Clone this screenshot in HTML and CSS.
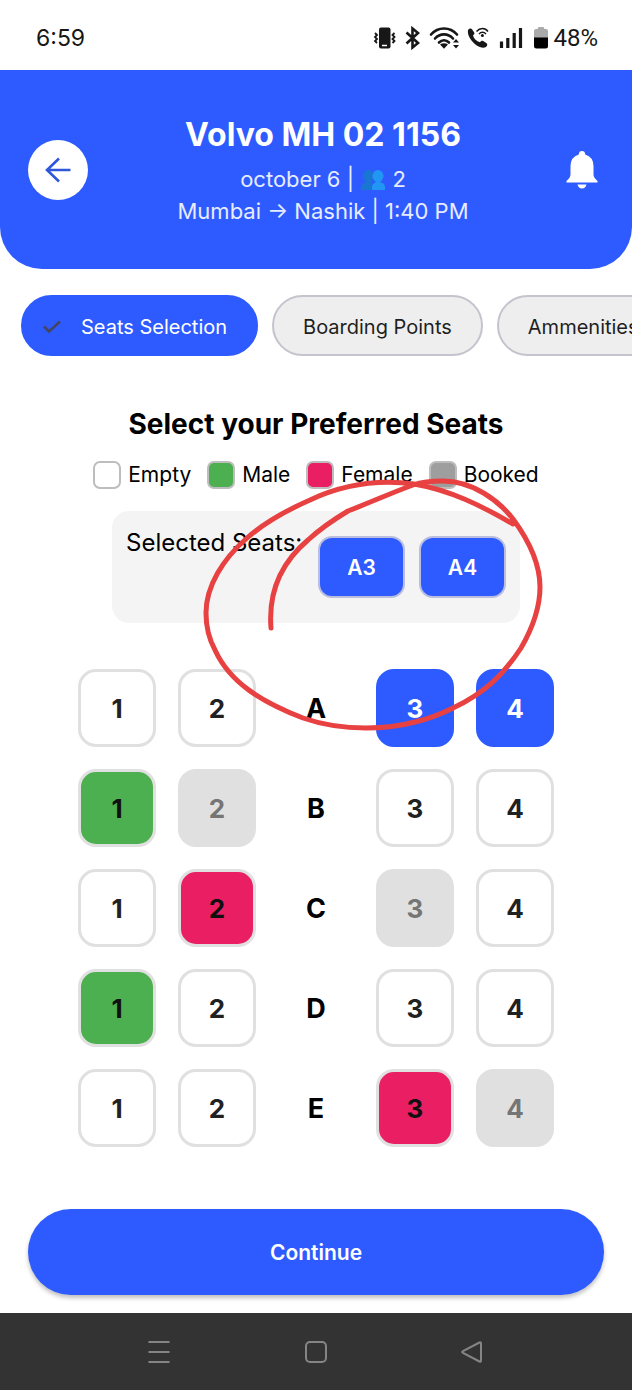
FILE: index.html
```html
<!DOCTYPE html>
<html lang="en">
<head>
<meta charset="utf-8">
<meta name="viewport" content="width=device-width, initial-scale=1">
<title>Seat selection</title>
<link rel="stylesheet" href="styles.css">
</head>
<body>
<div class="screen">
  <div class="status">
    <span class="clock">6:59</span>
    <div class="indicators">
      <svg width="24" height="24" viewBox="0 0 24 24" aria-hidden="true"><rect x="6" y="1.500" width="11.500" height="21" rx="2" fill="#171717"/><path d="M9 19.500h5" stroke="#fff" stroke-width="1.500"/><path d="M2 7l2 2-2 2 2 2-2 2 2 2M21.500 7l-2 2 2 2-2 2 2 2-2 2" fill="none" stroke="#171717" stroke-width="1.800"/></svg>
      <svg class="bluetooth" width="16" height="24" viewBox="0 0 16 24" aria-hidden="true"><path d="M1.500 6.500l11.500 10.500L7.500 21.500V2.500L13 7 1.500 17.500" fill="none" stroke="#171717" stroke-width="2.600"/></svg>
      <svg class="wifi" width="32" height="24" viewBox="0 0 32 24" aria-hidden="true"><g fill="none" stroke="#171717" stroke-width="2.600" stroke-linecap="round"><path d="M2 8.500C9 .5 21 .5 28 8.500"/><path d="M6 12.500c5-5.500 13-5.500 18 0"/><path d="M10 16.500c3-3 7-3 10 0"/></g><path d="M11 18.500q4-2.500 8 0L15 22.800zM24 16.500l3-3.500 3 3.500zM24 19l3 3.500 3-3.500z" fill="#171717"/></svg>
      <svg class="call" width="24" height="24" viewBox="0 0 24 24" aria-hidden="true"><path d="M1 4c.8-1.500 3-2.200 4-.8l2.200 3.300c.6 1-.1 2-1.200 3 .8 3.200 3.500 5.800 7 6.800 1-1.300 2-1.900 3.200-1.200l3.400 2.100c1.200.8.6 3-.7 3.900-2.200 1.400-6.200.6-9.500-1.800C4.500 15.500 0 9.500 1 4z" fill="#171717"/><g fill="none" stroke="#171717" stroke-width="1.500"><path d="M9.500 5.500c3.500-4 8.500-4 11.500 0"/><path d="M12 8c2-2.200 5-2.200 7 0"/></g><circle cx="15.400" cy="9.500" r="1.500" fill="#171717"/></svg>
      <svg class="signal" width="24" height="24" viewBox="0 0 24 24" aria-hidden="true"><path d="M2.500 15.500V22M8.800 12v10M15.200 7v15M21.500 2v20" stroke="#171717" stroke-width="3.200"/></svg>
      <svg class="battery" width="16" height="24" viewBox="0 0 16 24" aria-hidden="true"><path d="M1 12V5q0-2 2-2h1.500l1-2h5l1 2H13q2 0 2 2v7z" fill="#aaa"/><path d="M1 11.500h14V20q0 2.500-2.500 2.500h-9Q1 22.500 1 20z" fill="#000"/></svg>
      <span class="charge">48%</span>
    </div>
  </div>

  <header class="trip">
    <button class="back" type="button" aria-label="Back"><svg width="28" height="28" viewBox="0 0 28 28"><path d="M26.500 14H3M15 2.500L3 14l12 11.500" fill="none" stroke="#2f57d9" stroke-width="2.600"/></svg></button>
    <div class="trip-info">
      <h1 class="trip-name">Volvo MH 02 1156</h1>
      <p class="trip-line">october 6 | <svg class="people" width="26" height="22" viewBox="0 0 26 22" role="img" aria-label="passengers"><g fill="#1976d2"><ellipse cx="8.500" cy="7" rx="5.500" ry="6"/><path d="M1 21v-3q1-4 5-4.500L7 11h5v10z"/></g><g fill="#2196f3"><ellipse cx="18" cy="7" rx="5.500" ry="6"/><path d="M12 21v-3q0-3 3.500-4.500v-2h5v2q4.500.8 4.500 4.500v3z"/></g></svg> 2</p>
      <p class="trip-line">Mumbai → Nashik | 1:40 PM</p>
    </div>
    <button class="bell" type="button" aria-label="Notifications"><svg width="32" height="38" viewBox="0 0 32 38"><path d="M16 0q3 0 3.200 3.400Q27.500 6 27.500 15v8.500q0 3 4 6.500v1.500H.5V30q4-3.500 4-6.500V15Q4.500 6 12.800 3.400 13 0 16 0zM11.500 33.500h9Q19.500 37.500 16 37.500t-4.500-4z" fill="#fff"/></svg></button>
  </header>

  <nav class="tabs" aria-label="Booking steps">
    <button class="tab tab-active" type="button" aria-pressed="true"><svg class="tick" width="18" height="14" viewBox="0 0 18 14" aria-hidden="true"><path d="M1 6.500l5 5L17 1.500" fill="none" stroke="#43455f" stroke-width="2.600"/></svg>Seats Selection</button>
    <button class="tab" type="button">Boarding Points</button>
    <button class="tab" type="button">Ammenities</button>
  </nav>

  <main class="booking">
    <h2 class="heading">Select your Preferred Seats</h2>
    <ul class="legend">
      <li class="key"><span class="swatch"></span>Empty</li>
      <li class="key"><span class="swatch male"></span>Male</li>
      <li class="key"><span class="swatch female"></span>Female</li>
      <li class="key"><span class="swatch booked"></span>Booked</li>
    </ul>
    <section class="selected">
      <span class="selected-label">Selected Seats:</span>
      <div class="chips"><button class="chip" type="button">A3</button><button class="chip" type="button">A4</button></div>
    </section>
    <div class="seats">
      <button class="seat" type="button">1</button><button class="seat" type="button">2</button><span class="row-name">A</span><button class="seat chosen" type="button" aria-pressed="true">3</button><button class="seat chosen" type="button" aria-pressed="true">4</button>
      <button class="seat male" type="button">1</button><button class="seat taken" type="button" disabled>2</button><span class="row-name">B</span><button class="seat" type="button">3</button><button class="seat" type="button">4</button>
      <button class="seat" type="button">1</button><button class="seat female" type="button">2</button><span class="row-name">C</span><button class="seat taken" type="button" disabled>3</button><button class="seat" type="button">4</button>
      <button class="seat male" type="button">1</button><button class="seat" type="button">2</button><span class="row-name">D</span><button class="seat" type="button">3</button><button class="seat" type="button">4</button>
      <button class="seat" type="button">1</button><button class="seat" type="button">2</button><span class="row-name">E</span><button class="seat female" type="button">3</button><button class="seat taken" type="button" disabled>4</button>
    </div>
    <svg class="scribble" width="350" height="260" viewBox="198 474 350 260" aria-hidden="true"><path d="M513 524C482 506 450 490 414 484C375 479 340 486 310 500C285 511 264 523 247 538C223 559 206 586 206 613C206 628 209 639 215 650C230 683 262 702 303 718C323 725 344 728 366 728C384 728 400 726 415 722C428 719 441 714 453 708C485 693 504 674 521 648C532 629 540 607 540 587C540 561 527 538 513 519C499 501 473 481 443 481C431 481 422 482 413 485C391 493 369 503 348 511C333 520 320 529 308 540C282 562 268 590 271 628" fill="none" stroke="#e84142" stroke-width="5" stroke-linecap="round" stroke-linejoin="round"/></svg>
  </main>

  <div class="action"><button class="continue" type="button">Continue</button></div>

  <div class="system-nav">
    <button class="sys" type="button" aria-label="Recent apps"><svg width="24" height="24" viewBox="0 0 24 24"><path d="M1.500 2h21M1.500 12h21M1.500 22h21"/></svg></button>
    <button class="sys" type="button" aria-label="Home"><svg width="24" height="24" viewBox="0 0 24 24"><rect x="2" y="2" width="20" height="20" rx="4"/></svg></button>
    <button class="sys" type="button" aria-label="System back"><svg width="24" height="24" viewBox="0 0 24 24"><path d="M18.500 2.500q1.500-.8 1.500 1v17q0 1.800-1.500 1L2 13q-1.500-1 0-2z"/></svg></button>
  </div>
</div>
</body>
</html>
```
FILE: styles.css
```css
* { box-sizing: border-box; }
body { margin: 0; background: #fff; color: #000; font-family: Inter, Roboto, sans-serif; }
h1, h2, p, ul { margin: 0; padding: 0; }
button { font: inherit; color: inherit; margin: 0; padding: 0; border: 0; background: none; cursor: pointer; }
svg { flex: none; }

.screen { min-height: 100vh; display: flex; flex-direction: column; overflow: hidden; }

.status { display: flex; align-items: center; justify-content: space-between; height: 70px; padding: 6px 34px 0 36px; color: #171717; font-family: Roboto, sans-serif; font-size: 24px; }
.clock { font-family: Inter, sans-serif; font-size: 23px; }
.indicators { display: flex; align-items: center; }
.bluetooth { margin-left: 8px; }
.wifi { margin-left: 8px; }
.call { margin-left: 6px; }
.signal { margin-left: 8px; }
.battery { margin-left: 10px; }
.charge { margin-left: 4px; }

.trip { display: flex; align-items: center; justify-content: space-between; height: 199px; padding: 0 28px; border-radius: 0 0 42px 42px; background: #2e5bff; color: #fff; }
.back { display: flex; align-items: center; justify-content: center; width: 60px; height: 60px; border-radius: 50%; background: #fff; }
.trip-info { padding-top: 4px; text-align: center; }
.trip-name { margin-bottom: 10px; font-size: 32px; line-height: 36px; font-weight: 700; }
.trip-line { color: #e8ecff; font-size: 22px; line-height: 32px; }
.people { vertical-align: -4px; }
.bell { display: flex; padding: 0 6px 0 8px; }

.tabs { display: flex; gap: 14px; padding: 26px 0 0 21px; }
.tab { display: flex; flex: none; align-items: center; height: 61px; padding: 2px 29px 0; border: 2px solid #c5c3cd; border-radius: 31px; background: #eee; color: #1f1f1f; font-size: 20px; }
.tab-active { padding: 2px 29px 0 20px; border-color: #2e5bff; background: #2e5bff; color: #fff; }
.tick { margin-right: 20px; }

.booking { position: relative; display: flex; flex-direction: column; align-items: center; padding-top: 51px; }
.heading { font-size: 28px; line-height: 34px; font-weight: 700; }
.legend { display: flex; gap: 16px; margin-top: 20px; list-style: none; font-size: 21px; line-height: 28px; }
.key { display: flex; align-items: center; gap: 7px; }
.swatch { width: 28px; height: 28px; border: 2px solid #bdbdbd; border-radius: 7px; }
.selected { display: flex; justify-content: space-between; width: 408px; margin-top: 22px; padding: 14px; border-radius: 17px; background: #f4f4f4; }
.selected-label { font-size: 24px; line-height: 36px; }
.chips { display: flex; gap: 14px; padding: 11px 0; }
.chip { width: 87px; height: 62px; border: 2px solid #b9bde0; border-radius: 14px; background: #2e5bff; color: #fff; font-size: 21px; font-weight: 600; }

.seats { display: grid; grid-template-columns: 78px 78px 76px 78px 78px; gap: 22px; margin-top: 46px; }
.seat { height: 78px; border: 3px solid #e0e0e0; border-radius: 18px; color: #212121; font-size: 26px; font-weight: 700; }
.row-name { align-self: center; text-align: center; font-size: 27px; font-weight: 700; }
.male { background: #4caf50; }
.female { background: #e91e63; }
.booked { background: #9e9e9e; }
.seat.male, .seat.female { color: #101010; }
.seat.taken { background: #e0e0e0; color: #757575; }
.seat.chosen { border-color: #2e5bff; background: #2e5bff; color: #fff; }
.scribble { position: absolute; top: 118px; left: calc(50% - 118px); pointer-events: none; }

.action { margin-top: auto; padding: 60px 28px 18px; }
.continue { display: block; width: 100%; height: 86px; border-radius: 43px; background: #2e5bff; box-shadow: 0 3px 4px rgba(0, 0, 0, 0.25); color: #fff; font-size: 21px; font-weight: 600; }

.system-nav { display: flex; align-items: center; justify-content: space-around; height: 77px; padding: 0 81px; background: #333; }
.sys { display: flex; }
.sys svg { fill: none; stroke: #858585; stroke-width: 2px; }
```
